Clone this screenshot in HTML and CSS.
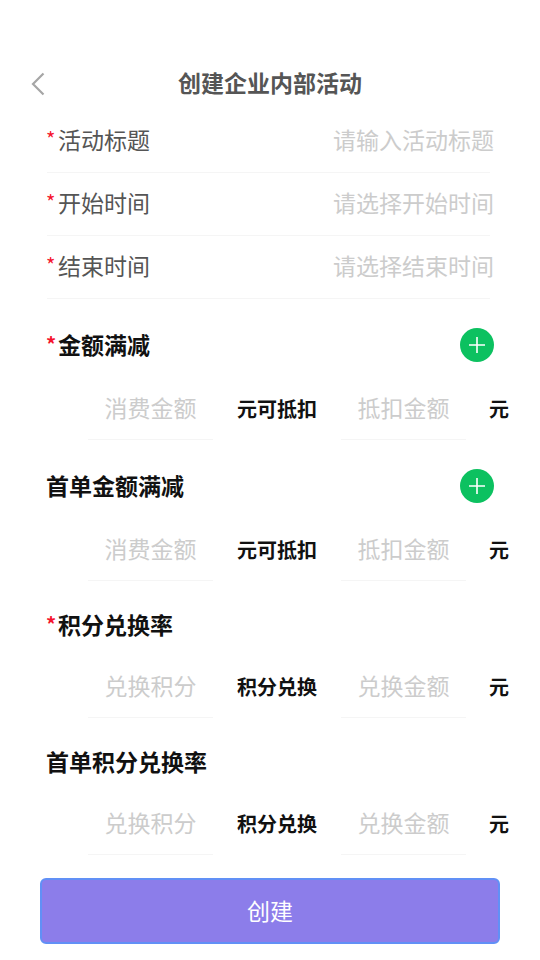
FILE: index.html
```html
<!DOCTYPE html>
<html lang="zh-CN">
<head>
<meta charset="utf-8">
<title>创建企业内部活动</title>
<link rel="stylesheet" href="styles.css">
</head>
<body>
<div class="page">
  <header class="header">
    <svg class="back" width="16" height="24" viewBox="0 0 16 24" aria-hidden="true"><path d="M13.5 1.5 L3 12 L13.5 22.5" fill="none" stroke="#a6a6a6" stroke-width="2.2"/></svg>
    <h1 class="title">创建企业内部活动</h1>
  </header>
  <div class="fields">
    <div class="field"><span class="field-label"><span class="star">*</span>活动标题</span><span class="field-hint">请输入活动标题</span></div>
    <div class="field"><span class="field-label"><span class="star">*</span>开始时间</span><span class="field-hint">请选择开始时间</span></div>
    <div class="field"><span class="field-label"><span class="star">*</span>结束时间</span><span class="field-hint">请选择结束时间</span></div>
  </div>
  <section class="group group-tall">
    <div class="group-head"><span class="group-title"><span class="star">*</span>金额满减</span>
      <svg class="plus" width="34" height="34" viewBox="0 0 34 34" aria-hidden="true"><circle cx="17" cy="17" r="17" fill="#0cc160"/><path d="M17 9V25M9 17H25" stroke="#fff" stroke-width="1.6"/></svg></div>
    <div class="pair"><span class="box">消费金额</span><span class="unit">元可抵扣</span><span class="box">抵扣金额</span><span class="unit unit-end">元</span></div>
  </section>
  <section class="group group-tall">
    <div class="group-head"><span class="group-title">首单金额满减</span>
      <svg class="plus" width="34" height="34" viewBox="0 0 34 34" aria-hidden="true"><circle cx="17" cy="17" r="17" fill="#0cc160"/><path d="M17 9V25M9 17H25" stroke="#fff" stroke-width="1.6"/></svg></div>
    <div class="pair"><span class="box">消费金额</span><span class="unit">元可抵扣</span><span class="box">抵扣金额</span><span class="unit unit-end">元</span></div>
  </section>
  <section class="group">
    <div class="group-head"><span class="group-title"><span class="star">*</span>积分兑换率</span></div>
    <div class="pair"><span class="box">兑换积分</span><span class="unit">积分兑换</span><span class="box">兑换金额</span><span class="unit unit-end">元</span></div>
  </section>
  <section class="group">
    <div class="group-head"><span class="group-title">首单积分兑换率</span></div>
    <div class="pair"><span class="box">兑换积分</span><span class="unit">积分兑换</span><span class="box">兑换金额</span><span class="unit unit-end">元</span></div>
  </section>
  <button class="submit" type="button">创建</button>
</div>
</body>
</html>
```
FILE: styles.css
```css
* { box-sizing: border-box; }
html, body { margin: 0; padding: 0; background: #fff; }
body { font-family: "Noto Sans CJK SC", "Noto Sans", sans-serif; }
.page { width: 540px; height: 960px; padding-top: 60px; overflow: hidden; }
.header { height: 50px; padding-bottom: 6px; position: relative; display: flex; align-items: center; justify-content: center; }
.back { position: absolute; left: 30px; top: 12px; }
.title { margin: 0; font-size: 23px; font-weight: 700; color: #555; line-height: 32px; }
.fields { margin: 0 50px 0 47px; }
.field { height: 63px; padding-bottom: 4px; display: flex; align-items: center; justify-content: space-between; border-bottom: 1px solid #f5f5f5; }
.field-label { font-size: 23px; color: #555; line-height: 32px; margin-left: -1px; }
.field-hint { font-size: 23px; color: #ccc; line-height: 32px; margin-right: -4px; }
.star { display: inline-block; width: 12px; color: #f5142d; font-size: 20px; line-height: 1; vertical-align: 2px; }
.group { padding-top: 28px; }
.group-head { height: 32px; margin: 0 46px 14px; display: flex; align-items: center; justify-content: space-between; }
.group-tall { padding-top: 29px; }
.group-tall .group-head { height: 34px; margin-bottom: 15px; }
.group-title { font-size: 23px; font-weight: 700; color: #111; line-height: 32px; padding-bottom: 2px; }
.pair { display: flex; align-items: center; gap: 24px; padding-left: 88px; }
.box { width: 125px; height: 63px; padding-bottom: 3px; display: flex; align-items: center; justify-content: center; font-size: 23px; color: #ccc; border-bottom: 1px solid #f5f5f5; }
.unit { font-size: 20px; font-weight: 700; color: #111; }
.unit-end { margin-left: -1px; }
.submit { display: block; width: 460px; height: 66px; margin: 23px 0 0 40px; padding: 0 0 3px; background: #8c7dea; border: 2px solid #6190f6; border-radius: 6px; color: #fff; font: inherit; font-size: 23px; }
```
